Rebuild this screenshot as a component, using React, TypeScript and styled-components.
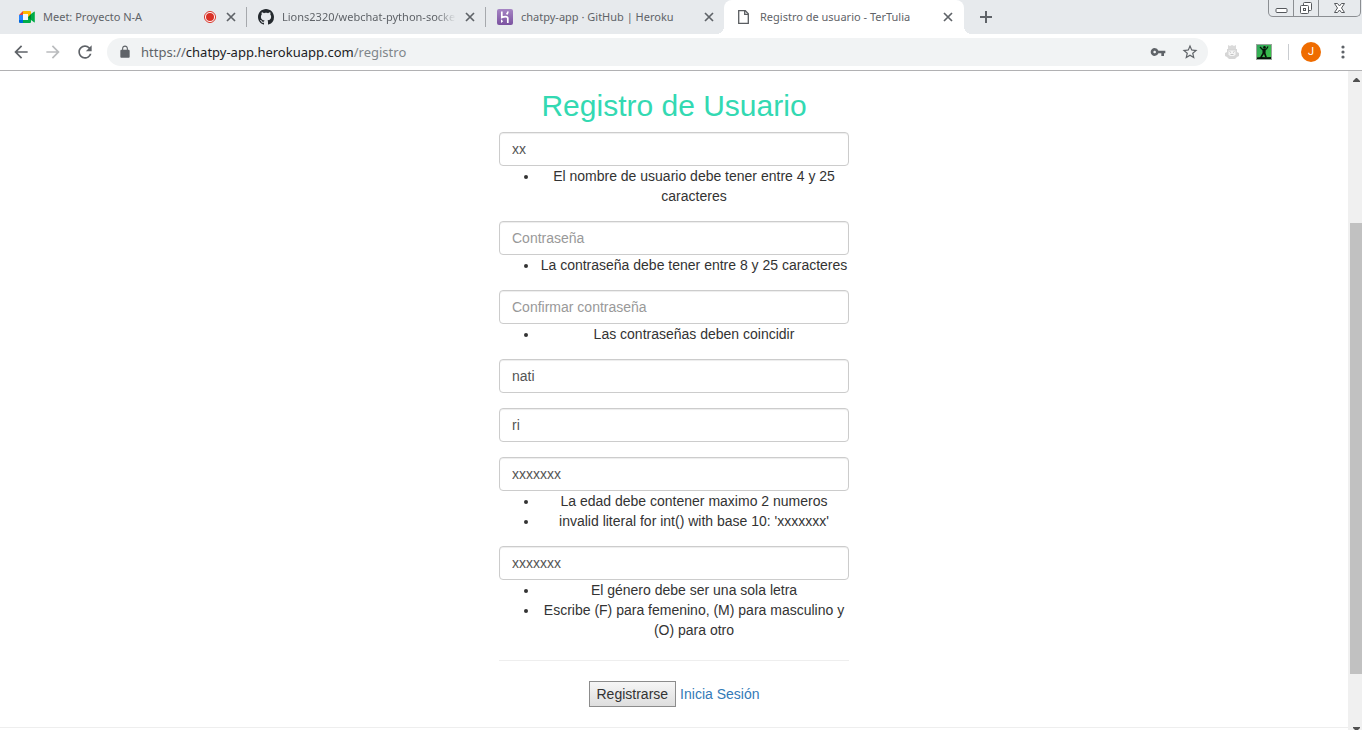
import React from "react";
import styled, { createGlobalStyle, css } from "styled-components";

const UI_FONT = `"Noto Sans", "Open Sans", sans-serif`;
const PAGE_FONT = `"Liberation Sans", Arial, sans-serif`;

const GlobalStyle = createGlobalStyle`
  *, *::before, *::after { box-sizing: border-box; }
  body { margin: 0; background: #fff; }
`;

/* ---------- browser frame ---------- */

const Browser = styled.div`
  display: flex;
  flex-direction: column;
  height: 100vh;
  overflow: hidden;
  font-family: ${UI_FONT};
`;

const TabStrip = styled.div`
  display: flex;
  flex: none;
  height: 34px;
  padding-left: 8px;
  background: #e7eaed;
`;

const TabItem = styled.div<{ $active?: boolean; $divider?: boolean }>`
  position: relative;
  display: flex;
  align-items: center;
  flex: 0 1 239px;
  min-width: 60px;
  height: 34px;
  padding: 0 8px 0 11px;
  color: #5f6368;

  ${(p) =>
    p.$divider &&
    css`
      &::after {
        content: "";
        position: absolute;
        right: 0;
        top: 7px;
        width: 1px;
        height: 20px;
        background: #a6a9ad;
      }
    `}

  ${(p) =>
    p.$active &&
    css`
      flex-basis: 240px;
      margin-left: -1px;
      padding-left: 12px;
      background: #fff;
      border-radius: 8px 8px 0 0;
      &::before,
      &::after {
        content: "";
        position: absolute;
        bottom: 0;
        width: 8px;
        height: 8px;
      }
      &::before {
        right: 100%;
        background: radial-gradient(circle at 0 0, transparent 8px, #fff 8px);
      }
      &::after {
        left: 100%;
        background: radial-gradient(circle at 100% 0, transparent 8px, #fff 8px);
      }
    `}
`;

const TabTitle = styled.span<{ $fade?: boolean }>`
  flex: 1;
  min-width: 0;
  margin-left: 8px;
  overflow: hidden;
  white-space: nowrap;
  font-size: 11px;
  line-height: 18px;
  ${(p) =>
    p.$fade &&
    css`
      mask-image: linear-gradient(to left, transparent, #000 20px);
    `}
`;

const iconButton = css`
  display: flex;
  align-items: center;
  justify-content: center;
  flex: none;
  padding: 0;
  border: 0;
  background: none;
  color: #5f6368;
`;

const CloseButton = styled.button`
  ${iconButton}
  width: 16px;
  height: 16px;
  margin-left: 6px;
`;

const NewTabButton = styled.button`
  ${iconButton}
  width: 28px;
  height: 34px;
  margin-left: 8px;
`;

const WindowControls = styled.div`
  display: flex;
  flex: none;
  height: 17px;
  margin: 0 1px 0 auto;
  border: 1px solid #8b8e92;
  border-top: 0;
  border-radius: 0 0 5px 5px;
`;

const WindowButton = styled.button<{ $width: number }>`
  ${iconButton}
  width: ${(p) => p.$width}px;
  & + & {
    border-left: 1px solid #8b8e92;
  }
`;

const Toolbar = styled.div`
  display: flex;
  align-items: center;
  flex: none;
  height: 37px;
  padding: 0 3px 0 5px;
  border-bottom: 1px solid #b1b1b3;
  background: #fff;
`;

const ToolButton = styled.button`
  ${iconButton}
  width: 32px;
  height: 28px;
`;

const AddressBar = styled.div`
  display: flex;
  align-items: center;
  flex: 1;
  min-width: 0;
  height: 28px;
  margin: 0 8px 0 6px;
  padding: 0 2px 0 11px;
  border-radius: 14px;
  background: #f1f3f4;
`;

const Url = styled.div`
  flex: 1;
  min-width: 0;
  margin-left: 9px;
  overflow: hidden;
  white-space: nowrap;
  outline: 0;
  font-size: 13px;
  line-height: 20px;
  color: #80868b;
`;

const Scheme = styled.span`
  color: #5f6368;
`;

const Host = styled.span`
  color: #202124;
`;

const ToolbarDivider = styled.div`
  width: 1px;
  height: 16px;
  margin: 0 6px 0 8px;
  background: #c9ccd0;
`;

const Avatar = styled.span`
  width: 20px;
  height: 20px;
  border-radius: 50%;
  background: #ef6c00;
  color: #fff;
  font-family: Roboto, sans-serif;
  font-size: 11px;
  line-height: 20px;
  text-align: center;
`;

const Viewport = styled.div`
  display: flex;
  flex: 1;
  min-height: 0;
`;

const ScrollTrack = styled.div`
  display: flex;
  flex-direction: column;
  flex: none;
  width: 14px;
  padding-left: 2px;
  background: #f0f0f0;
`;

const ScrollArrow = styled.div<{ $down?: boolean }>`
  display: flex;
  justify-content: flex-end;
  flex: none;
  height: ${(p) => (p.$down ? 3 : 17)}px;
  padding: ${(p) => (p.$down ? 0 : 7)}px 2px 0 0;
  overflow: hidden;
`;

const ScrollGap = styled.div<{ $grow: number }>`
  flex: ${(p) => p.$grow} 1 0;
`;

const ScrollThumb = styled.div`
  flex: 451 1 0;
  background: #c1c1c1;
`;

/* ---------- registration page ---------- */

const Page = styled.main`
  flex: 1;
  min-width: 0;
  overflow-y: auto;
  scrollbar-width: none;
  background: #fff;
  color: #333;
  font-family: ${PAGE_FONT};
  font-size: 14px;
  line-height: 20px;
`;

const Form = styled.form`
  max-width: 350px;
  margin: 0 auto;
  padding: 18px 0 20px;
  text-align: center;
`;

const Title = styled.h2`
  margin: 0 0 10px;
  color: #33d9b2;
  font-size: 30px;
  font-weight: 400;
  line-height: 33px;
`;

const Field = styled.div`
  margin-bottom: 15px;
`;

const TextInput = styled.input`
  display: block;
  width: 100%;
  height: 34px;
  padding: 6px 12px;
  border: 1px solid #ccc;
  border-radius: 4px;
  background: #fff;
  box-shadow: inset 0 1px 1px rgba(0, 0, 0, 0.075);
  color: #555;
  font-family: inherit;
  font-size: 14px;
  line-height: 20px;
  &::placeholder {
    color: #999;
  }
`;

const Errors = styled.ul`
  margin: 0;
  padding-left: 40px;
`;

const Rule = styled.hr`
  margin: 20px 0;
  border: 0;
  border-top: 1px solid #eee;
`;

const Actions = styled.div`
  display: flex;
  align-items: center;
  justify-content: center;
  gap: 4px;
`;

const SubmitButton = styled.button`
  height: 26px;
  padding: 0 7px;
  border: 1px solid #8c8c8c;
  border-radius: 0;
  background: linear-gradient(#f6f6f6, #dedede);
  color: #333;
  font-family: inherit;
  font-size: 14px;
  line-height: 20px;
`;

const LoginLink = styled.a`
  color: #337ab7;
  text-decoration: none;
`;

const FooterRule = styled.hr`
  margin: 0;
  border: 0;
  border-top: 1px solid #eee;
`;

/* ---------- icons ---------- */

const MeetIcon = () => (
  <svg width="16" height="16" viewBox="0 0 16 16" aria-hidden="true">
    <path d="M4 5h6v6H4z" fill="#f4f7fa" />
    <path d="M0 6l4-4v4z" fill="#ea4335" />
    <path d="M0 6h4v5H0z" fill="#2684fc" />
    <path d="M0 11h4v3H1a1 1 0 0 1-1-1z" fill="#0066da" />
    <path d="M4 2h7a1 1 0 0 1 1 1v4l-3 1V5H4z" fill="#ffba00" />
    <path d="M4 11h5V8h3v5a1 1 0 0 1-1 1H4z" fill="#00ac47" />
    <path d="M9 8l3-3v6z" fill="#00832d" />
    <path d="M12 5l3-2.300q.8-.4.8.4v9.800q0 .8-.8.4L12 11z" fill="#00ac47" />
  </svg>
);

const GitHubIcon = () => (
  <svg width="16" height="16" viewBox="0 0 16 16" fill="#24292e" aria-hidden="true">
    <path d="M8 0C3.58 0 0 3.58 0 8c0 3.54 2.29 6.53 5.47 7.59.4.07.55-.17.55-.38 0-.19-.01-.82-.01-1.49-2.01.37-2.53-.49-2.69-.94-.09-.23-.48-.94-.82-1.13-.28-.15-.68-.52-.01-.53.63-.01 1.08.58 1.23.82.72 1.21 1.87.87 2.33.66.07-.52.28-.87.51-1.07-1.78-.2-3.64-.89-3.64-3.95 0-.87.31-1.59.82-2.15-.08-.2-.36-1.02.08-2.12 0 0 .67-.21 2.2.82.64-.18 1.32-.27 2-.27s1.36.09 2 .27c1.53-1.04 2.2-.82 2.2-.82.44 1.1.16 1.92.08 2.12.51.56.82 1.27.82 2.15 0 3.07-1.87 3.75-3.65 3.95.29.25.54.73.54 1.48 0 1.07-.01 1.93-.01 2.2 0 .21.15.46.55.38A8.01 8.01 0 0 0 16 8c0-4.42-3.58-8-8-8z" />
  </svg>
);

const HerokuIcon = () => (
  <svg width="16" height="16" viewBox="0 0 16 16" aria-hidden="true">
    <defs>
      <linearGradient id="heroku" x1="0" y1="0" x2="0" y2="1">
        <stop offset="0" stopColor="#a685c4" />
        <stop offset="1" stopColor="#7b52a0" />
      </linearGradient>
    </defs>
    <rect width="16" height="16" rx="2" fill="url(#heroku)" />
    <path d="M4.800 2.500v5.900c2-.9 6-1.700 6 .8V14M10.900 2.500c0 1.200-.5 2-1.300 2.900" fill="none" stroke="#fff" strokeWidth="1.700" />
    <path d="M4 10.300l2.200 1.900L4 14z" fill="#fff" />
  </svg>
);

const FileIcon = () => (
  <svg width="16" height="16" viewBox="0 0 16 16" fill="none" stroke="#5a5d61" strokeWidth="1.300" aria-hidden="true">
    <path d="M2.700 1.700h6.600l3 3v9.600H2.700z" />
    <path d="M8.700 1.700v3.600h3.600" />
  </svg>
);

const RecordIcon = () => (
  <svg width="14" height="14" viewBox="0 0 14 14" role="img" aria-label="Grabando">
    <circle cx="7" cy="7" r="5.500" fill="#fff" stroke="#d93025" strokeWidth="1" />
    <circle cx="7" cy="7" r="4" fill="#d93025" />
  </svg>
);

const CloseIcon = () => (
  <svg width="10" height="10" viewBox="0 0 10 10" stroke="currentColor" strokeWidth="1.700" aria-hidden="true">
    <path d="M1 1l8 8M9 1L1 9" />
  </svg>
);

const PlusIcon = () => (
  <svg width="12" height="12" viewBox="0 0 12 12" stroke="currentColor" strokeWidth="2" aria-hidden="true">
    <path d="M6 0v12M0 6h12" />
  </svg>
);

const Glyph = ({ d, size, color = "currentColor" }: { d: string; size: number; color?: string }) => (
  <svg width={size} height={size} viewBox="0 0 24 24" fill={color} aria-hidden="true">
    <path d={d} />
  </svg>
);

const PATHS = {
  back: "M20 11H7.830l5.590-5.590L12 4l-8 8 8 8 1.410-1.410L7.830 13H20v-2z",
  forward: "M12 4l-1.410 1.410L16.170 11H4v2h12.170l-5.580 5.590L12 20l8-8z",
  reload:
    "M17.650 6.350A7.958 7.958 0 0 0 12 4c-4.420 0-7.990 3.580-7.990 8s3.570 8 7.990 8c3.730 0 6.840-2.550 7.730-6h-2.080A5.990 5.990 0 0 1 12 18c-3.310 0-6-2.690-6-6s2.690-6 6-6c1.660 0 3.140.69 4.220 1.780L13 11h7V4l-2.350 2.350z",
  lock: "M18 8h-1V6c0-2.760-2.240-5-5-5S7 3.240 7 6v2H6c-1.100 0-2 .9-2 2v10c0 1.100.9 2 2 2h12c1.100 0 2-.9 2-2V10c0-1.100-.9-2-2-2zm-2.900 0H8.900V6c0-1.710 1.390-3.100 3.100-3.100s3.100 1.390 3.100 3.100z",
  key: "M12.650 10A5.990 5.990 0 0 0 7 6c-3.310 0-6 2.690-6 6s2.690 6 6 6a5.990 5.990 0 0 0 5.650-4H17v4h4v-4h2v-4H12.650zM7 14c-1.100 0-2-.9-2-2s.9-2 2-2 2 .9 2 2-.9 2-2 2z",
  star: "M22 9.240l-7.190-.62L12 2 9.190 8.630 2 9.240l5.460 4.730L5.820 21 12 17.270 18.180 21l-1.630-7.030L22 9.240zM12 15.400l-3.760 2.270 1-4.280-3.320-2.880 4.380-.38L12 6.100l1.710 4.040 4.380.38-3.320 2.880 1 4.280L12 15.400z",
};

const BotIcon = () => (
  <svg width="16" height="16" viewBox="0 0 16 16" aria-hidden="true">
    <path d="M4 1l2 1 2-1 2 1 2-1v4H4z" fill="#dadada" />
    <path d="M3 5h10v3l2 1v3l-2 1-2 2H5l-2-2-2-1V9l2-1z" fill="#d6d6d6" />
    <path d="M4.500 6.500h7v4l-1.500 1.500H6l-1.500-1.500z" fill="#f4f4f4" />
    <path d="M5.500 7.500l1.500 1M10.500 7.500L9 8.500M6.500 10.500h3" stroke="#c4c4c4" />
  </svg>
);

const HikerIcon = () => (
  <svg width="16" height="16" viewBox="0 0 16 16" aria-hidden="true">
    <defs>
      <linearGradient id="hill" x1="0" y1="0" x2="1" y2="1">
        <stop offset="0" stopColor="#2fa35c" />
        <stop offset="1" stopColor="#3cc845" />
      </linearGradient>
    </defs>
    <rect x="0.500" y="0.500" width="15" height="15" fill="url(#hill)" stroke="#9aa59c" />
    <path d="M1 13.500l4-.5 5 .3 5-.3v2H1z" fill="#07140a" />
    <path d="M4 3l3 3M7 5.500L10.500 5l1.500-2.500" fill="none" stroke="#07140a" strokeWidth="1.300" />
    <path d="M6.500 5h3.300l-.3 4 1.500 4.500H9.300L8 10l-2.500 3.700H3.800L6.500 9z" fill="#07140a" />
    <circle cx="8.500" cy="3.300" r="1.300" fill="#07140a" />
  </svg>
);

const DotsIcon = () => (
  <svg width="4" height="14" viewBox="0 0 4 14" fill="currentColor" aria-hidden="true">
    <circle cx="2" cy="2" r="1.600" />
    <circle cx="2" cy="7" r="1.600" />
    <circle cx="2" cy="12" r="1.600" />
  </svg>
);

const MinimizeIcon = () => (
  <svg width="13" height="16" viewBox="0 0 13 16" fill="#fff" stroke="#55585c" aria-hidden="true">
    <rect x="1" y="8.500" width="11" height="4" rx="1" />
  </svg>
);

const RestoreIcon = () => (
  <svg width="14" height="16" viewBox="0 0 14 16" fill="#fff" stroke="#55585c" aria-hidden="true">
    <rect x="4.500" y="2.500" width="8" height="8" rx="1" />
    <rect x="1.500" y="5.500" width="8" height="8" rx="1" />
    <rect x="4.500" y="8.500" width="2" height="2" />
  </svg>
);

const WindowCloseIcon = () => (
  <svg width="13" height="16" viewBox="0 0 13 16" fill="#fff" stroke="#55585c" aria-hidden="true">
    <path d="M1.500 3.500h3l2 2.500 2-2.500h3L8.500 8l3 4.500h-3l-2-2.500-2 2.500h-3L4.500 8z" />
  </svg>
);

const Triangle = ({ down }: { down?: boolean }) => (
  <svg width="7" height="4" viewBox="0 0 7 4" fill="#505050" aria-hidden="true">
    <path d={down ? "M0 0h7v1L4 4H3L0 1z" : "M0 4h7V3L4 0H3L0 3z"} />
  </svg>
);

/* ---------- content ---------- */

interface TabData {
  title: string;
  icon: React.ReactNode;
  recording?: boolean;
  divider?: boolean;
  active?: boolean;
  fade?: boolean;
}

const tabs: TabData[] = [
  { title: "Meet: Proyecto N-A", icon: <MeetIcon />, recording: true, divider: true },
  { title: "Lions2320/webchat-python-socke", icon: <GitHubIcon />, divider: true, fade: true },
  { title: "chatpy-app · GitHub | Heroku", icon: <HerokuIcon /> },
  { title: "Registro de usuario - TerTulia", icon: <FileIcon />, active: true },
];

interface FieldData {
  name: string;
  label: string;
  type?: string;
  value?: string;
  placeholder?: string;
  errors?: string[];
}

const fields: FieldData[] = [
  {
    name: "username",
    label: "Nombre de usuario",
    value: "xx",
    errors: ["El nombre de usuario debe tener entre 4 y 25 caracteres"],
  },
  {
    name: "password",
    label: "Contraseña",
    type: "password",
    placeholder: "Contraseña",
    errors: ["La contraseña debe tener entre 8 y 25 caracteres"],
  },
  {
    name: "confirm",
    label: "Confirmar contraseña",
    type: "password",
    placeholder: "Confirmar contraseña",
    errors: ["Las contraseñas deben coincidir"],
  },
  { name: "nombre", label: "Nombre", value: "nati" },
  { name: "apellido", label: "Apellido", value: "ri" },
  {
    name: "edad",
    label: "Edad",
    value: "xxxxxxx",
    errors: ["La edad debe contener maximo 2 numeros", "invalid literal for int() with base 10: 'xxxxxxx'"],
  },
  {
    name: "genero",
    label: "Género",
    value: "xxxxxxx",
    errors: ["El género debe ser una sola letra", "Escribe (F) para femenino, (M) para masculino y (O) para otro"],
  },
];

export default function App() {
  return (
    <Browser>
      <GlobalStyle />
      <TabStrip>
        {tabs.map((tab) => (
          <TabItem key={tab.title} $active={tab.active} $divider={tab.divider}>
            {tab.icon}
            <TabTitle $fade={tab.fade}>{tab.title}</TabTitle>
            {tab.recording && <RecordIcon />}
            <CloseButton type="button" aria-label="Cerrar pestaña">
              <CloseIcon />
            </CloseButton>
          </TabItem>
        ))}
        <NewTabButton type="button" aria-label="Nueva pestaña">
          <PlusIcon />
        </NewTabButton>
        <WindowControls>
          <WindowButton type="button" aria-label="Minimizar" $width={24}>
            <MinimizeIcon />
          </WindowButton>
          <WindowButton type="button" aria-label="Restaurar" $width={25}>
            <RestoreIcon />
          </WindowButton>
          <WindowButton type="button" aria-label="Cerrar" $width={42}>
            <WindowCloseIcon />
          </WindowButton>
        </WindowControls>
      </TabStrip>

      <Toolbar>
        <ToolButton type="button" aria-label="Atrás">
          <Glyph d={PATHS.back} size={20} />
        </ToolButton>
        <ToolButton type="button" aria-label="Adelante">
          <Glyph d={PATHS.forward} size={20} color="#babcbe" />
        </ToolButton>
        <ToolButton type="button" aria-label="Recargar">
          <Glyph d={PATHS.reload} size={20} />
        </ToolButton>
        <AddressBar>
          <Glyph d={PATHS.lock} size={14} color="#5f6368" />
          <Url role="textbox" aria-label="Dirección" contentEditable suppressContentEditableWarning spellCheck={false}>
            <Scheme>https://</Scheme>
            <Host>chatpy-app.herokuapp.com</Host>/registro
          </Url>
          <ToolButton type="button" aria-label="Contraseñas">
            <Glyph d={PATHS.key} size={16} />
          </ToolButton>
          <ToolButton type="button" aria-label="Favoritos">
            <Glyph d={PATHS.star} size={18} />
          </ToolButton>
        </AddressBar>
        <ToolButton type="button" aria-label="Extensión">
          <BotIcon />
        </ToolButton>
        <ToolButton type="button" aria-label="Extensión">
          <HikerIcon />
        </ToolButton>
        <ToolbarDivider />
        <ToolButton type="button" aria-label="Perfil">
          <Avatar>J</Avatar>
        </ToolButton>
        <ToolButton type="button" aria-label="Menú">
          <DotsIcon />
        </ToolButton>
      </Toolbar>

      <Viewport>
        <Page>
          <Form onSubmit={(e) => e.preventDefault()}>
            <Title>Registro de Usuario</Title>
            {fields.map((f) => (
              <Field key={f.name}>
                <TextInput
                  name={f.name}
                  type={f.type ?? "text"}
                  aria-label={f.label}
                  defaultValue={f.value}
                  placeholder={f.placeholder}
                />
                {f.errors && (
                  <Errors>
                    {f.errors.map((error) => (
                      <li key={error}>{error}</li>
                    ))}
                  </Errors>
                )}
              </Field>
            ))}
            <Rule />
            <Actions>
              <SubmitButton type="submit">Registrarse</SubmitButton>
              <LoginLink href="#login">Inicia Sesión</LoginLink>
            </Actions>
          </Form>
          <FooterRule />
        </Page>
        <ScrollTrack aria-hidden="true">
          <ScrollArrow>
            <Triangle />
          </ScrollArrow>
          <ScrollGap $grow={135} />
          <ScrollThumb />
          <ScrollGap $grow={53} />
          <ScrollArrow $down>
            <Triangle down />
          </ScrollArrow>
        </ScrollTrack>
      </Viewport>
    </Browser>
  );
}
